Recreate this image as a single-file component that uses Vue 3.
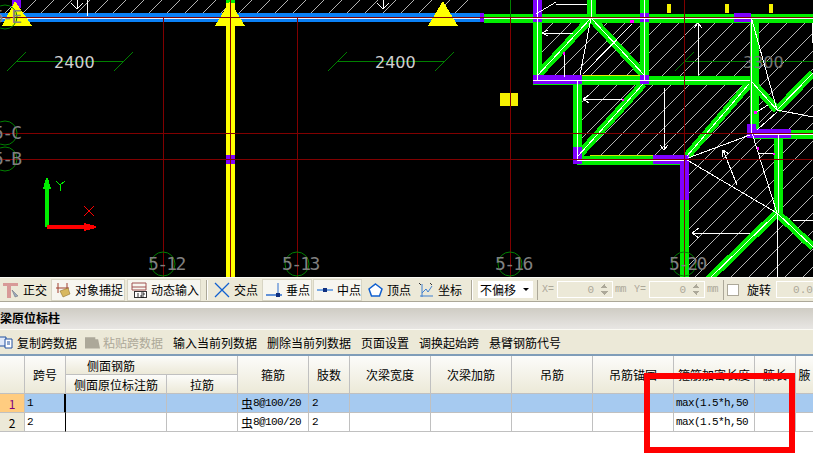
<script setup>
// 绿色梁段：[x1, y1, x2, y2, 宽度, 是否不画中心线]
const beams = [
  [484, 18, 813, 18, 9], [537, 0, 537, 80, 9], [591, 0, 591, 18, 9], [644, 0, 644, 80, 9],
  [533, 80, 750, 80, 9], [577, 80, 577, 160, 9], [577, 160, 684, 160, 9], [684, 160, 684, 277, 9],
  [754, 18, 754, 134, 9, true], [754, 134, 813, 134, 9], [778, 134, 778, 213, 9],
  [591, 18, 537, 76, 8], [591, 18, 645, 76, 8], [643, 84, 578, 156, 8], [749, 84, 687, 156, 8],
  [752, 82, 777, 110, 8], [813, 73, 777, 110, 8], [777, 213, 708, 280, 8], [777, 213, 813, 247, 8]
]
// 紫色连接块
const purple = [
  [480, 13, 4, 9], [533, 0, 9, 22], [640, 13, 9, 9], [734, 13, 17, 9], [533, 75, 49, 9],
  [640, 75, 9, 9], [573, 147, 9, 17], [653, 155, 36, 9], [680, 155, 9, 45], [747, 124, 9, 14],
  [750, 129, 41, 9], [226, 155, 9, 9], [12, 0, 9, 8]
]
// 白色细线及箭头
const whites = [
  'M542 33H573M548 30L542 33L548 36', 'M564 52V77', 'M698 75V24M694 28L698 23L702 28',
  'M583 99H623M589 95L583 99L589 103', 'M664 88V150M660 145L664 150L668 145',
  'M692 233H750M699 228L692 233L699 238', 'M737 185L723 150M722 157L723 150L729 154',
  'M687 160L777 213', 'M752 133L777 213', 'M688 158L750 135', 'M759 153H775', 'M793 220H813',
  'M752 20L777 110L813 117', 'M777 112L757 130', 'M755 113L768 105', 'M812 23V43', 'M751 18V134',
  'M591 18L580 75', 'M583 74L632 24', 'M777 213V277', 'M77 0V8M71 3L77 9L83 3', 'M87 0V16',
  'M383 0V8M377 3L383 9L389 3', 'M536 14L556 2M556 4H587'
]
const magenta = [[630, 20, 4, 3], [563, 52, 2, 3], [622, 99, 2, 2], [754, 111, 3, 3], [757, 147, 2, 3], [773, 153, 2, 2]]
const ticks = [667, 725, 769]
const dims = [
  { x1: 7, x2: 133, lx1: 17, lx2: 123, tx: 54 },
  { x1: 328, x2: 454, lx1: 338, lx2: 444, tx: 375 }
]
const axes = [
  { x: 163, label: '5-12' }, { x: 297, label: '5-13' },
  { x: 510, label: '5-16' }, { x: 684, label: '5-20' }
]
const sideAxes = [{ y: 17, label: '5-E' }, { y: 133, label: '5-C' }, { y: 159, label: '5-B' }]

const columns = [25, 41, 101, 71, 71, 41, 81, 81, 81, 81, 81, 41, 18]
const gridColumns = columns.map(w => w + 'px').join(' ')
const plainHeads = [
  { t: '箍筋', c: 5 }, { t: '肢数', c: 6 }, { t: '次梁宽度', c: 7 }, { t: '次梁加筋', c: 8 },
  { t: '吊筋', c: 9 }, { t: '吊筋锚固', c: 10 }, { t: '箍筋加密长度', c: 11 }, { t: '腋长', c: 12 }, { t: '腋', c: 13 }
]
const rows = [
  { n: '1', span: '1', active: true },
  { n: '2', span: '2', active: false }
]
const barTwo = ['输入当前列数据', '删除当前列数据', '页面设置', '调换起始跨', '悬臂钢筋代号']
</script>

<template>
  <div class="app">
    <svg class="cad" width="813" height="277" viewBox="0 0 813 277" shape-rendering="crispEdges">
      <defs>
        <pattern id="hatch" width="18" height="18" patternUnits="userSpaceOnUse">
          <path d="M0 18L18 0" stroke="#b4b4b4" stroke-width="1" />
        </pattern>
      </defs>
      <rect width="813" height="277" fill="#000" />
      <rect x="0" y="0" width="470" height="13" fill="url(#hatch)" />
      <path d="M533 18H813V277H684V160H577V80H533Z" fill="url(#hatch)" />

      <!-- 标注 -->
      <g v-for="d in dims" :key="d.x1" stroke="#008000" fill="none">
        <path :d="`M${d.lx1} 61H${d.lx2}M${d.x1} 71L${d.x1 + 19} 52M${d.x2 - 19} 71L${d.x2} 52`" />
      </g>
      <path d="M675 71L694 52M684 61H813" stroke="#008000" fill="none" />
      <text v-for="d in dims" :key="'t' + d.x1" :x="d.tx" y="68" class="dim">2400</text>

      <!-- 蓝色梁 -->
      <rect x="0" y="13" width="484" height="9" fill="#0a80f5" />
      <rect x="0" y="18" width="484" height="1" fill="#e8f2ff" />

      <!-- 黄色柱 -->
      <rect x="226" y="0" width="9" height="277" fill="#ffff00" />
      <rect x="226" y="0" width="9" height="3" fill="#00ee00" />
      <rect v-for="t in ticks" :key="t" :x="t" y="4" width="4" height="9" fill="#f5f000" />
      <rect x="500" y="93" width="18" height="13" fill="#f5f000" />

      <!-- 绿色梁 -->
      <line v-for="(b, i) in beams" :key="'g' + i" :x1="b[0]" :y1="b[1]" :x2="b[2]" :y2="b[3]" stroke="#00ee00" :stroke-width="b[4]" />
      <rect v-for="(p, i) in purple" :key="'p' + i" :x="p[0]" :y="p[1]" :width="p[2]" :height="p[3]" fill="#8000ff" />
      <template v-for="(b, i) in beams" :key="'c' + i">
        <line v-if="!b[5]" :x1="b[0]" :y1="b[1]" :x2="b[2]" :y2="b[3]" stroke="#fff" stroke-width="1" />
      </template>
      <rect x="582" y="75" width="58" height="1" fill="#e8e800" />
      <rect x="590" y="155" width="63" height="1" fill="#c8e800" />
      <text x="743" y="68" class="dim faint">3300</text>

      <path v-for="(w, i) in whites" :key="'w' + i" :d="w" stroke="#fff" stroke-width="1" fill="none" />
      <rect v-for="(m, i) in magenta" :key="'m' + i" :x="m[0]" :y="m[1]" :width="m[2]" :height="m[3]" fill="#ff00ff" />

      <!-- 三角形柱标记 -->
      <path d="M15 1L32 26H2Z M230 1L245 26H215Z M443 1L458 26H428Z" fill="#ffff00" />

      <!-- 轴网 -->
      <path d="M0 17.500H813M0 133.500H813M0 159.500H813M163.500 17V277M297.500 17V277M230.500 0V277M510.500 17V277M684.500 0V277" stroke="#800000" fill="none" />
      <path d="M510.500 0V17" stroke="#008000" />

      <g v-for="a in axes" :key="a.x">
        <circle :cx="a.x" cy="264" r="12" fill="none" stroke="#008000" shape-rendering="auto" />
        <text :x="a.x - 15" y="270" class="axis">{{ a.label }}</text>
      </g>
      <g v-for="a in sideAxes" :key="a.y">
        <circle cx="5" :cy="a.y" r="12" fill="none" stroke="#008000" shape-rendering="auto" />
        <text x="-7" :y="a.y + 6" class="axis">{{ a.label }}</text>
      </g>

      <!-- 坐标系 -->
      <g transform="translate(0 130)">
        <path d="M45 97V59H43L46 48H48L51 59H49V97Z" fill="#00ee00" />
        <path d="M47 95H84V93L96 96V98L84 101V99H47Z" fill="#ff0000" />
        <path d="M56 51L60 55L65 51M60 55V61" stroke="#00ee00" fill="none" />
        <path d="M84 76L94 86M94 76L84 86" stroke="#ff0000" fill="none" />
      </g>
    </svg>

    <div class="bar-snap">
      <span class="tool"><svg width="16" height="16" viewBox="0 0 16 16"><path d="M0 1H15V4H8V16H4V4H0Z" fill="#d89a98" /><path d="M9 8L15 14L12 15Z" fill="#9ab" stroke="#667" stroke-width=".5" /></svg>正交</span>
      <span class="tool checked w74"><svg width="16" height="16" viewBox="0 0 16 16"><path d="M3 1V11M12 1V11M1 6H14" stroke="#a04030" fill="none" /><path d="M5 9L13 6L15 12L8 15Z" fill="#d8b860" stroke="#806020" stroke-width=".5" /></svg>对象捕捉</span>
      <span class="tool checked w74"><svg width="16" height="16" viewBox="0 0 16 16"><path d="M1 1H15M1 5H15V8H1ZM1 1V5M15 1V5" stroke="#a05050" fill="none" /><rect x="3.500" y="9.500" width="12" height="6" fill="#fff" stroke="#333" /><path d="M7 11V15M10 11H13V13H10V15H13" stroke="#000" fill="none" stroke-width=".8" /></svg>动态输入</span>
      <i class="sep grip first"></i>
      <span class="tool"><svg width="16" height="16" viewBox="0 0 16 16"><path d="M1 1L15 15M15 1L1 15" stroke="#1060d0" stroke-width="1.300" /></svg>交点</span>
      <span class="tool checked w50"><svg width="16" height="16" viewBox="0 0 16 16"><path d="M0 13H16" stroke="#3070d0" stroke-width="1.500" /><path d="M12 1V13" stroke="#3070d0" /><rect x="10" y="11" width="4" height="4" fill="#103080" /></svg>垂点</span>
      <span class="tool checked w49"><svg width="16" height="16" viewBox="0 0 16 16"><path d="M0 8H16" stroke="#5090e0" stroke-width="1.500" /><rect x="6" y="6" width="4" height="4" fill="#103080" /></svg>中点</span>
      <span class="tool vertex"><svg width="15" height="16" viewBox="0 0 15 16"><path d="M7.500 2L14 7L11.500 14H3.500L1 7Z" fill="#fff" stroke="#1060d0" stroke-width="1.500" /></svg>顶点</span>
      <span class="tool coord"><svg width="16" height="16" viewBox="0 0 16 16"><path d="M2 14H15M4 15V2M4 11L8 7L10 10L14 4" stroke="#4080d0" fill="none" /><path d="M1 1L3 3M12 1L14 3" stroke="#333" /></svg>坐标</span>
      <i class="sep grip"></i>
      <span class="combo"><span class="combo-text">不偏移</span><span class="combo-arrow"></span></span>
      <i class="sep thin"></i>
      <span class="label-off">X=</span>
      <span class="spin"><span>0</span><em></em></span>
      <span class="unit">mm</span>
      <span class="label-off ml">Y=</span>
      <span class="spin"><span>0</span><em></em></span>
      <span class="unit">mm</span>
      <i class="sep thin"></i>
      <span class="check"></span>
      <span class="rotate">旋转</span>
      <span class="spin short"><span>0.00</span></span>
    </div>

    <div class="panel-title"><b>梁原位标柱</b></div>

    <div class="bar-actions">
      <span class="act first"><svg width="14" height="14" viewBox="0 0 14 14"><path d="M-1 2H6V11H-1Z" fill="#dfe8f8" stroke="#2050a0" /><path d="M5 4H12V13H5Z" fill="#fff" stroke="#2050a0" /><path d="M7 7H10M7 9H10" stroke="#2050a0" /></svg>复制跨数据</span>
      <span class="act off"><svg width="15" height="14" viewBox="0 0 16 14"><path d="M0 2H11V4H14L16 14H0Z" fill="#aca899" /></svg>粘贴跨数据</span>
      <span v-for="t in barTwo" :key="t" class="act">{{ t }}</span>
    </div>

    <div class="sheet" :style="{ gridTemplateColumns: gridColumns }">
      <div class="head" style="grid-row: 1 / 3; grid-column: 1"></div>
      <div class="head" style="grid-row: 1 / 3; grid-column: 2">跨号</div>
      <div class="head group" style="grid-row: 1; grid-column: 3 / 5">侧面钢筋</div>
      <div class="head" style="grid-row: 2; grid-column: 3">侧面原位标注筋</div>
      <div class="head" style="grid-row: 2; grid-column: 4">拉筋</div>
      <div
        v-for="h in plainHeads"
        :key="h.t"
        class="head"
        :style="{ gridRow: '1 / 3', gridColumn: h.c }"
      >{{ h.t }}</div>

      <template v-for="r in rows" :key="r.n">
        <div class="num" :class="{ on: r.active }">{{ r.n }}</div>
        <div class="cell bar-right" :class="{ on: r.active, thick: r.active }">{{ r.span }}</div>
        <div class="cell" :class="{ on: r.active }"></div>
        <div class="cell" :class="{ on: r.active }"></div>
        <div class="cell mono" :class="{ on: r.active }"><span class="cjk">虫</span>8@100/20</div>
        <div class="cell mono" :class="{ on: r.active }">2</div>
        <div class="cell" :class="{ on: r.active }"></div>
        <div class="cell" :class="{ on: r.active }"></div>
        <div class="cell" :class="{ on: r.active }"></div>
        <div class="cell" :class="{ on: r.active }"></div>
        <div class="cell mono max" :class="{ on: r.active }">max(1.5*h,50</div>
        <div class="cell" :class="{ on: r.active }"></div>
        <div class="cell last" :class="{ on: r.active }"></div>
      </template>
    </div>

    <div class="mark"></div>
  </div>
</template>

<style scoped>
.app {
  position: relative;
  width: 813px;
  height: 475px;
  overflow: hidden;
  background: #fff;
  font-family: "Noto Sans CJK SC", "Liberation Sans", sans-serif;
  font-size: 12px;
  color: #000;
}

.cad {
  display: block;
}

.dim {
  font-family: "DejaVu Sans", sans-serif;
  font-size: 16px;
  fill: #d0d0d0;
}

.dim.faint {
  fill: #777;
}

.axis {
  font-family: "DejaVu Sans Mono", monospace;
  font-size: 18px;
  letter-spacing: -1.700px;
  fill: #808080;
}

.bar-snap {
  display: flex;
  align-items: center;
  height: 25px;
  box-sizing: border-box;
  padding-left: 3px;
  background: #ece9d8;
  border-top: 1px solid #fbfaf4;
  border-bottom: 1px solid #aca899;
  white-space: nowrap;
  overflow: hidden;
}

.tool {
  display: flex;
  align-items: center;
  gap: 4px;
  height: 22px;
  margin-right: 4px;
  line-height: 1;
  flex: none;
}

.tool.vertex {
  margin-right: 7px;
}

.tool.coord {
  margin-right: 9px;
}

.tool.checked {
  box-sizing: border-box;
  margin-right: 2px;
  padding-left: 3px;
  background: #f7f6f0;
  border: 1px solid #fff;
  outline: 1px solid #d8d5c4;
  outline-offset: -1px;
}

.w74 {
  width: 74px;
}

.tool.w50 {
  width: 50px;
  margin-right: 1px;
}

.tool.w49 {
  width: 49px;
  margin-right: 6px;
}

.sep {
  display: block;
  flex: none;
}

.sep.grip {
  box-sizing: border-box;
  width: 2px;
  height: 20px;
  margin: 0 5px 0 0;
  border-left: 1px solid #aca899;
  border-right: 1px solid #fff;
}

.sep.grip.first {
  margin: 0 6px 0 3px;
}

.sep.thin {
  width: 1px;
  height: 20px;
  margin: 0 4px;
  background: #aca899;
}

.combo {
  display: flex;
  align-items: center;
  width: 55px;
  height: 17px;
  background: #fff;
  flex: none;
}

.combo-text {
  flex: 1;
  padding-left: 2px;
}

.combo-arrow {
  width: 0;
  height: 0;
  margin-right: 4px;
  border: 3px solid transparent;
  border-top: 3px solid #000;
  border-bottom: 0;
}

.label-off,
.unit {
  font-family: "Liberation Mono", monospace;
  font-size: 10px;
  color: #aca899;
  flex: none;
}

.label-off {
  width: 15px;
}

.label-off.ml {
  margin-left: 7px;
}

.unit {
  margin-left: 2px;
  width: 12px;
  letter-spacing: -0.5px;
}

.spin {
  position: relative;
  display: flex;
  justify-content: flex-end;
  align-items: center;
  box-sizing: border-box;
  width: 56px;
  height: 17px;
  padding-right: 18px;
  border: 1px solid #fff;
  background: #ece9d8;
  color: #aca899;
  font-family: "Liberation Mono", monospace;
  font-size: 11px;
  flex: none;
}

.spin em {
  position: absolute;
  right: 4px;
  top: 2px;
  width: 7px;
  height: 11px;
  background:
    linear-gradient(135deg, transparent 50%, #aca899 50%) 0 0 / 4px 4px no-repeat,
    linear-gradient(225deg, transparent 50%, #aca899 50%) 3px 0 / 4px 4px no-repeat,
    linear-gradient(45deg, transparent 50%, #aca899 50%) 0 7px / 4px 4px no-repeat,
    linear-gradient(315deg, transparent 50%, #aca899 50%) 3px 7px / 4px 4px no-repeat;
}

.spin.short {
  width: 50px;
  padding: 0 0 0 16px;
  justify-content: flex-start;
  margin-left: 5px;
}

.check {
  width: 10px;
  height: 10px;
  margin-left: -1px;
  border: 1px solid #aca899;
  background: #fff;
  flex: none;
}

.rotate {
  margin-left: 8px;
  flex: none;
}

.panel-title {
  height: 21px;
  margin-top: 6px;
  line-height: 20px;
  background: linear-gradient(#cfccc4, #e8e6e3);
  font-size: 12px;
}

.bar-actions {
  display: flex;
  align-items: center;
  height: 25px;
  box-sizing: border-box;
  background: #ece9d8;
  border-top: 1px solid #fbfaf4;
  white-space: nowrap;
  overflow: hidden;
}

.act {
  display: flex;
  align-items: center;
  gap: 3px;
  margin-right: 10px;
  flex: none;
}

.act.first {
  margin-right: 8px;
}

.act.off {
  color: #aca899;
}

.sheet {
  display: grid;
  grid-template-rows: 19px 19px 19px 19px;
  border-top: 2px solid #7f9db9;
  background: #fff;
}

.head {
  display: flex;
  align-items: center;
  justify-content: center;
  box-sizing: border-box;
  border-right: 1px solid #c0c0c0;
  border-bottom: 1px solid #c0c0c0;
  background: linear-gradient(#fcfcfa, #ece9d8);
  min-width: 0;
  overflow: hidden;
  white-space: nowrap;
}

.head.group {
  justify-content: flex-start;
  padding-left: 21px;
}

.num,
.cell {
  display: flex;
  align-items: center;
  box-sizing: border-box;
  border-right: 1px solid #c0c0c0;
  border-bottom: 1px solid #c0c0c0;
  white-space: nowrap;
  overflow: hidden;
}

.num {
  justify-content: center;
  background: #ece9d8;
}

.num.on {
  background: #ffcc80;
  color: #800080;
}

.cell {
  padding-left: 2px;
  font-family: "Liberation Mono", monospace;
  font-size: 11px;
}

.cell.on {
  background: #a6caf0;
}

.cell.bar-right {
  border-right: 1px solid #000;
}

.cell.thick {
  border-right: 2px solid #000;
}

.cell.mono {
  padding-left: 3px;
  letter-spacing: -0.6px;
}

.cell.max {
  padding-left: 2px;
}

.cjk {
  font-family: "Noto Sans CJK SC", sans-serif;
  font-size: 12px;
  letter-spacing: 0;
}

.cell.last {
  border-right: 0;
}

.mark {
  position: absolute;
  left: 644px;
  top: 373px;
  width: 151px;
  height: 80px;
  box-sizing: border-box;
  border: 6px solid #ff0000;
}
</style>

<style>
html,
body {
  background: #fff;
}
</style>
